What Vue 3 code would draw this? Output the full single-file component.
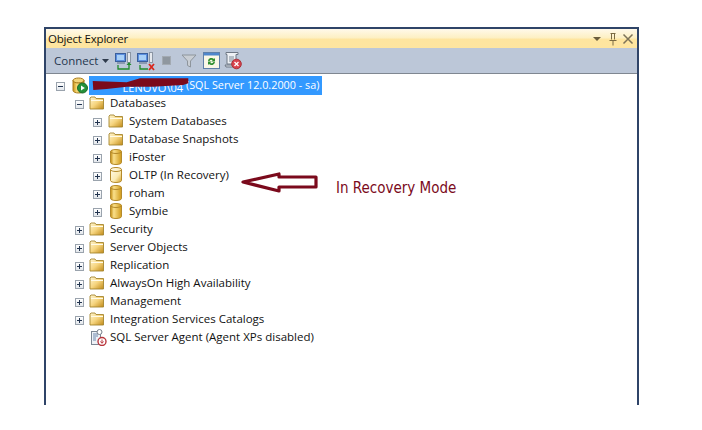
<script setup>
const rows = [
  { label: 'Databases', depth: 1, icon: 'folder', exp: 'minus' },
  { label: 'System Databases', depth: 2, icon: 'folder', exp: 'plus' },
  { label: 'Database Snapshots', depth: 2, icon: 'folder', exp: 'plus' },
  { label: 'iFoster', depth: 2, icon: 'db', exp: 'plus' },
  { label: 'OLTP (In Recovery)', depth: 2, icon: 'dbpale', exp: 'plus' },
  { label: 'roham', depth: 2, icon: 'db', exp: 'plus' },
  { label: 'Symbie', depth: 2, icon: 'db', exp: 'plus' },
  { label: 'Security', depth: 1, icon: 'folder', exp: 'plus' },
  { label: 'Server Objects', depth: 1, icon: 'folder', exp: 'plus' },
  { label: 'Replication', depth: 1, icon: 'folder', exp: 'plus' },
  { label: 'AlwaysOn High Availability', depth: 1, icon: 'folder', exp: 'plus' },
  { label: 'Management', depth: 1, icon: 'folder', exp: 'plus' },
  { label: 'Integration Services Catalogs', depth: 1, icon: 'folder', exp: 'plus' },
  { label: 'SQL Server Agent (Agent XPs disabled)', depth: 1, icon: 'agent', exp: 'none' },
]
</script>

<template>
  <div class="page">
    <div class="window">
      <div class="title">
        <span class="title-text">Object Explorer</span>
        <span class="title-tools">
          <svg width="12" height="12" viewBox="0 0 12 12"><path d="M2 4h8L6 8z" fill="#6b5d3c" /></svg>
          <svg width="12" height="14" viewBox="0 0 12 14"><path d="M3.500 1.500h5M4.500 1.500v6M7.500 1.500v6M2.500 8.500h7M6 8.500v5" fill="none" stroke="#7a6a42" /></svg>
          <svg width="14" height="12" viewBox="0 0 14 12"><path d="M2.500 1.500l9 9M11.500 1.500l-9 9" fill="none" stroke="#7d7358" stroke-width="1.500" /></svg>
        </span>
      </div>
      <div class="toolbar">
        <span class="connect">Connect</span>
        <svg class="caret" width="7" height="4" viewBox="0 0 7 4"><path d="M0 0h7L3.500 4z" fill="#2f3b4c" /></svg>
        <svg class="tb first" width="20" height="20" viewBox="0 0 20 20">
          <rect x="1.500" y="2.500" width="10" height="8" fill="#5b8fe0" stroke="#3b5f9c" />
          <rect x="3" y="4" width="7" height="5" fill="#a9d0f7" />
          <rect x="13.500" y="1.500" width="3" height="10" fill="#e6e9ee" stroke="#8b95a3" />
          <path d="M3 12h8" stroke="#7a8aa5" stroke-width="1.500" />
          <path d="M4 14v4h11v-5" fill="none" stroke="#1f8a2b" stroke-width="1.300" />
          <path d="M12.500 14l2.500-3 2.500 3z" fill="#1f8a2b" />
        </svg>
        <svg class="tb" width="20" height="20" viewBox="0 0 20 20">
          <rect x="1.500" y="2.500" width="10" height="8" fill="#5b8fe0" stroke="#3b5f9c" />
          <rect x="3" y="4" width="7" height="5" fill="#a9d0f7" />
          <rect x="13.500" y="1.500" width="3" height="10" fill="#e6e9ee" stroke="#8b95a3" />
          <path d="M3 12h8" stroke="#7a8aa5" stroke-width="1.500" />
          <path d="M4 14v4h8" fill="none" stroke="#1f8a2b" stroke-width="1.300" />
          <path d="M13 13l5 6M18 13l-5 6" stroke="#d8261c" stroke-width="1.800" />
        </svg>
        <span class="stop"></span>
        <svg class="tb filter" width="16" height="16" viewBox="0 0 16 16"><path d="M1 2h14L9.500 8v6l-3-1.500V8z" fill="#c9ced4" stroke="#8e959c" /></svg>
        <svg class="tb refresh" width="17" height="17" viewBox="0 0 17 17">
          <rect x=".5" y=".5" width="16" height="16" fill="#fbf7e6" stroke="#5f7fa8" />
          <rect x="1" y="1" width="15" height="2.500" fill="#4f86cc" />
          <path d="M5 9a3.500 3.500 0 0 1 6-2l1-1v3.500H8.500l1.200-1.200A2 2 0 0 0 6.500 9zM12 10a3.500 3.500 0 0 1-6 2l-1 1V9.500h3.500l-1.200 1.200A2 2 0 0 0 10.500 10z" fill="#2f8f2f" />
        </svg>
        <svg class="tb script" width="18" height="20" viewBox="0 0 18 20">
          <path d="M2 1.500h12v2h-2V13H3V3.500H2z" fill="#eef1f5" stroke="#6f7885" />
          <path d="M5 6h5M5 8h5M5 10h4" stroke="#7d8896" />
          <path d="M1 14h9v2H2z" fill="#d7dde5" stroke="#6f7885" />
          <circle cx="12.500" cy="13" r="4.800" fill="#d9434e" stroke="#a8323a" />
          <path d="M10.500 11l4 4M14.500 11l-4 4" stroke="#fff" stroke-width="1.300" />
        </svg>
      </div>
      <div class="tree">
        <div class="row server">
          <span class="exp"><span class="h"></span></span>
          <svg class="srv-icon" width="16" height="17" viewBox="0 0 16 17">
            <defs>
              <linearGradient id="gold" x1="0" x2="1" y1="0" y2="0">
                <stop offset="0" stop-color="#c98f12" /><stop offset=".35" stop-color="#f8dc7d" /><stop offset="1" stop-color="#d49a1c" />
              </linearGradient>
            </defs>
            <ellipse cx="6.500" cy="3.500" rx="5.500" ry="2.500" fill="#f3d47a" stroke="#a87c1e" />
            <path d="M1 3.500v10c0 1.500 2.500 2.500 5.500 2.500s5.500-1 5.500-2.500v-10c0 1.500-2.500 2.500-5.500 2.500S1 5 1 3.500z" fill="url(#gold)" stroke="#a87c1e" />
            <circle cx="10.500" cy="11" r="5" fill="#24903a" stroke="#1a6a2b" />
            <path d="M9 8.500l3.800 2.500L9 13.500z" fill="#fff" />
          </svg>
          <span class="sel">
            <span class="sel-hidden">LENOVO\04</span>
            <span class="sel-text">(SQL Server 12.0.2000 - sa)</span>
          </span>
        </div>
        <div v-for="r in rows" :key="r.label" class="row" :class="'d' + r.depth">
          <span v-if="r.exp !== 'none'" class="exp">
            <span class="h"></span>
            <span v-if="r.exp === 'plus'" class="v"></span>
          </span>
          <span v-else class="exp-none"></span>
          <svg v-if="r.icon === 'folder'" class="ico" width="16" height="14" viewBox="0 0 16 14">
            <defs>
              <linearGradient id="fold" x1="0" x2="1" y1="0" y2="1">
                <stop offset="0" stop-color="#fff6d2" /><stop offset=".5" stop-color="#f6d57f" /><stop offset="1" stop-color="#c08a18" />
              </linearGradient>
            </defs>
            <path d="M1 3V2l1-1h4l1 1.500h7.500V13H1z" fill="url(#fold)" stroke="#a5862f" stroke-width=".9" />
            <path d="M2 4.500h12" stroke="#fffbe8" />
          </svg>
          <svg v-else-if="r.icon === 'db' || r.icon === 'dbpale'" class="ico db" width="12" height="16" viewBox="0 0 12 16">
            <defs>
              <linearGradient id="dbg" x1="0" x2="1" y1="0" y2="0">
                <stop offset="0" stop-color="#c08a10" /><stop offset=".3" stop-color="#fae08b" /><stop offset="1" stop-color="#d09a1a" />
              </linearGradient>
              <linearGradient id="dbp" x1="0" x2="1" y1="0" y2="1">
                <stop offset="0" stop-color="#fffdf0" /><stop offset=".6" stop-color="#fbeab2" /><stop offset="1" stop-color="#d5a229" />
              </linearGradient>
            </defs>
            <path d="M.5 2.500C.5 1.300 3 .5 6 .5s5.500.8 5.500 2v11c0 1.200-2.500 2-5.500 2s-5.500-.8-5.500-2z" :fill="r.icon === 'db' ? 'url(#dbg)' : 'url(#dbp)'" stroke="#b48a2c" />
            <path d="M.5 2.500c0 1.200 2.500 2 5.500 2s5.500-.8 5.500-2" fill="none" stroke="#b48a2c" />
          </svg>
          <svg v-else class="ico agent-ico" width="17" height="17" viewBox="0 0 17 17">
            <rect x="1.500" y="2.500" width="9" height="13" fill="#eef2f7" stroke="#7c8794" />
            <path d="M3 5h5M3 7h5M3 9h3M3 11h3" stroke="#6d87ad" />
            <rect x="7" y=".5" width="5" height="5" rx="2.500" fill="#fff" stroke="#77808c" />
            <circle cx="12" cy="12.500" r="4" fill="#fff" stroke="#b8353c" stroke-width="1.400" />
            <path d="M12 10.500v3M10.500 12.500l1.500 1.800 1.500-1.800" fill="none" stroke="#b8353c" />
          </svg>
          <span class="label" :class="{ agent: r.icon === 'agent' }">{{ r.label }}</span>
        </div>
      </div>
    </div>
    <svg class="scribble" width="100" height="16" viewBox="0 0 100 16">
      <path d="M2.700 5L36.700 6.300 50 2.300H98.300V7.300L93 9 63 10.700H36.700L16.700 13 3.300 14z" fill="#7b0a1c" />
    </svg>
    <svg class="arrow" width="80" height="26" viewBox="0 0 80 26">
      <path d="M3 12L39 4V7H76V17H39V21z" fill="#fff" stroke="#7b0a1c" stroke-width="3.200" stroke-linejoin="round" />
    </svg>
    <span class="note">In Recovery Mode</span>
  </div>
</template>

<style>
html, body { margin: 0; background: #fff; overflow: hidden; }
</style>

<style scoped>
.page {
  position: relative;
  width: 702px;
  height: 430px;
  padding: 27px 0 0 44px;
  box-sizing: border-box;
  background: #fff;
  font-family: "Open Sans", "Noto Sans", sans-serif;
}
.window {
  width: 595px;
  height: 378px;
  box-sizing: border-box;
  border: 2px solid #2f4468;
  border-width: 2px 2px 0 2px;
  display: flex;
  flex-direction: column;
}
.title {
  height: 19px;
  flex: none;
  display: flex;
  align-items: center;
  justify-content: space-between;
  padding: 0 2px 0 2px;
  background: linear-gradient(#fff9ea 0%, #fdf0c4 45%, #fee59f 55%, #fee5a0 100%);
}
.title-text { font-size: 11.500px; color: #111; letter-spacing: -0.2px; }
.title-tools { display: flex; align-items: center; gap: 2px; }
.title-tools svg:first-child { margin-right: 2px; }
.toolbar {
  height: 26px;
  flex: none;
  box-sizing: border-box;
  display: flex;
  align-items: center;
  padding-left: 8px;
  background: #bcc7d8;
  border-bottom: 1px solid #7f8791;
}
.connect { font-size: 11.500px; color: #24364e; }
.caret { margin-left: 4px; }
.tb { margin-left: 2px; flex: none; }
.tb.first { margin-left: 5px; }
.stop {
  width: 7px;
  height: 7px;
  margin: 0 2px 0 6px;
  background: #8f979f;
  border: 1px solid #a3aab2;
}
.tb.filter { margin-left: 8px; }
.tb.refresh { margin-left: 6px; }
.tb.script { margin-left: 4px; }
.tree {
  flex: 1;
  background: #fff;
  padding-top: 2px;
}
.row {
  height: 18px;
  display: flex;
  align-items: center;
  font-size: 11.500px;
  color: #111;
  white-space: nowrap;
}
.server { padding-left: 10px; }
.d1 { padding-left: 29px; }
.d2 { padding-left: 47px; }
.exp {
  position: relative;
  width: 9px;
  height: 9px;
  box-sizing: border-box;
  flex: none;
  margin-top: 3px;
  border: 1px solid #9aa3ad;
  background: linear-gradient(#fff, #e3e7ec);
}
.exp-none { width: 9px; flex: none; }
.h { position: absolute; left: 1px; top: 3px; width: 5px; height: 1px; background: #22344f; }
.v { position: absolute; left: 3px; top: 1px; width: 1px; height: 5px; background: #22344f; }
.ico { margin-left: 5px; flex: none; }
.d2 .ico { margin-left: 6px; }
.d2 .ico.db { margin: 0 7px 0 8px; }
.ico.agent-ico { margin-left: 6px; }
.label { margin-left: 5px; margin-bottom: 2px; }
.db + .label { margin-left: 0; }
.label.agent { margin-left: 3px; }
.srv-icon { margin-left: 7px; flex: none; }
.sel {
  margin-left: 1px;
  height: 19px;
  width: 233px;
  box-sizing: border-box;
  display: flex;
  align-items: center;
  padding-left: 3px;
  background: #3399ff;
  color: #fff;
}
.sel-hidden {
  width: 94px;
  box-sizing: border-box;
  overflow: hidden;
  flex: none;
  padding: 5px 3px 0 0;
  font-size: 11px;
  line-height: 14px;
  text-align: right;
}
.sel-text { font-size: 10.800px; margin-bottom: 2px; }
.scribble { position: absolute; left: 90px; top: 76px; }
.arrow { position: absolute; left: 240px; top: 170px; }
.note {
  position: absolute;
  left: 336px;
  top: 179px;
  font-family: "DejaVu Sans", sans-serif;
  font-stretch: condensed;
  font-size: 15px;
  line-height: 19px;
  color: #7b0a1c;
}
</style>
